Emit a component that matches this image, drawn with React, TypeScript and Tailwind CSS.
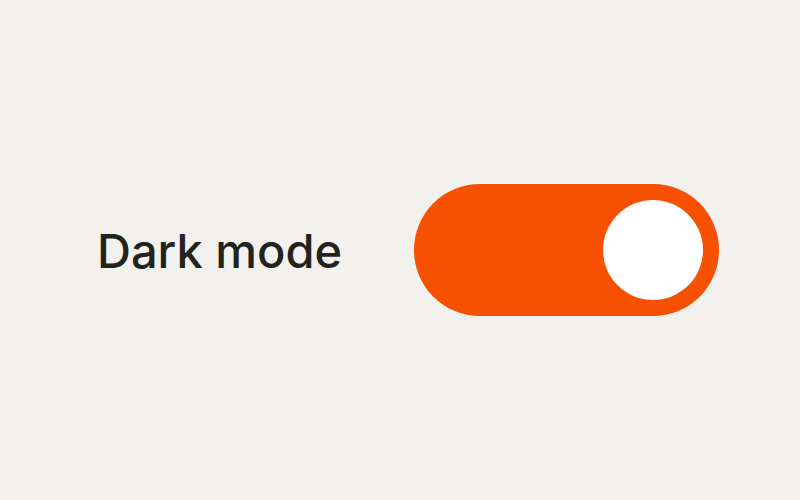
import React from "react";

export default function App() {
  return (
    <div className="w-[800px] h-[500px] bg-[#f2f1ed] flex items-center pl-[97px]" style={{ fontFamily: 'Inter, "Liberation Sans", Arial, sans-serif' }}>
      <span className="w-[317px] text-[47px] leading-none text-[#23221d] font-medium">Dark mode</span>
      <button className="w-[305px] h-[132px] rounded-full bg-[#f75000] flex items-center justify-end pr-[16px]">
        <span className="w-[100px] h-[100px] rounded-full bg-white block" />
      </button>
    </div>
  );
}
